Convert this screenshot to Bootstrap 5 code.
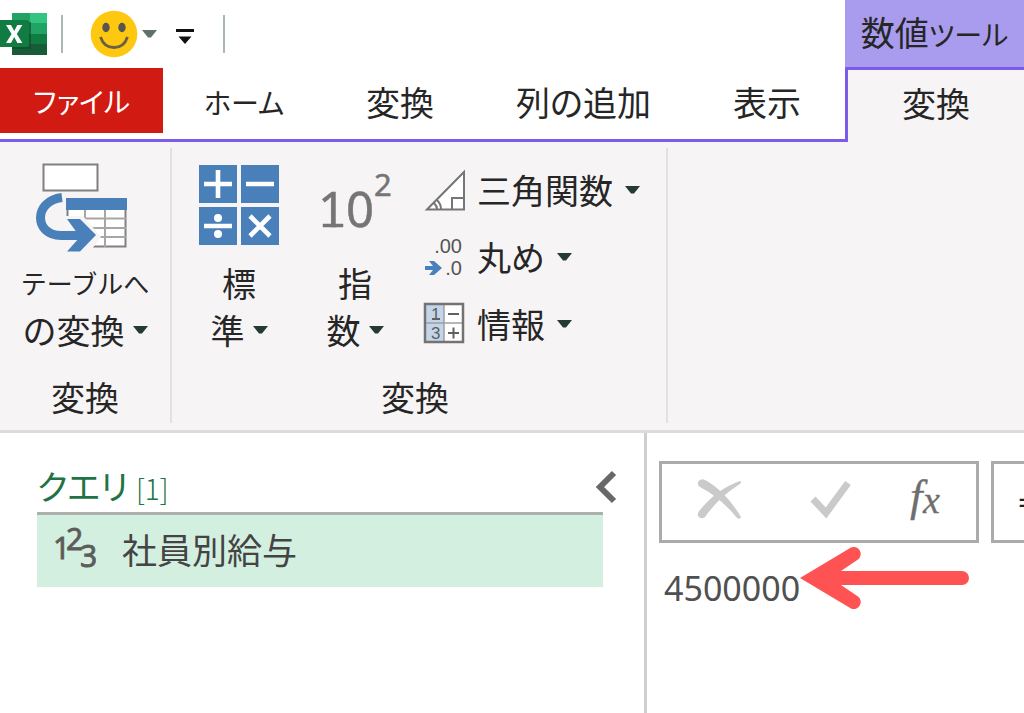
<!DOCTYPE html>
<html lang="ja">
<head>
<meta charset="utf-8">
<meta name="viewport" content="width=device-width, initial-scale=1">
<title>Power Query エディター</title>
<link href="https://cdn.jsdelivr.net/npm/bootstrap@5.3.0/dist/css/bootstrap.min.css" rel="stylesheet">
<style>
  body { font-family: "Noto Sans CJK JP", "Noto Sans", sans-serif; font-size: 34px; line-height: 48px; color: #262626; font-feature-settings: "palt"; font-weight: 400; overflow-x: hidden; }
  svg { display: block; flex: none; }
  .kana { font-size: 28px; }
  .kana-sm { font-size: 26px; }
  .btn-plain { border: 0; background: none; padding: 0; color: inherit; font-weight: inherit; }
  .quick-bar { height: 68px; }
  .quick-sep { width: 2px; height: 38px; background: #a9bab6; }
  .sep-first { margin: 0 27px 0 13px; }
  .sep-last { margin-left: 29px; }
  .quick-more { margin-left: 19px; }
  .tab-row { height: 74px; border-bottom: 3px solid #7a5bea; }
  .tab-item { display: block; padding: 10px 41px 0; color: #262626; text-decoration: none; white-space: nowrap; }
  .tab-file { width: 163px; height: 65px; padding: 9px 0 0; background: #d01a12; color: #fff; text-align: center; }
  .tool-side { width: 179px; }
  .tool-title { height: 67px; padding-top: 8px; background: #a99cee; }
  .tool-tab { height: 75px; padding: 9px 0 0; border-top: 3px solid #7a5bea; border-left: 3px solid #7a5bea; background: #f6f4f5; text-align: center; }
  .ribbon { background: #f6f4f5; border-bottom: 3px solid #dcdcdc; padding: 6px 0 7px; }
  .ribbon-group { border-right: 2px solid #dfe2e3; height: 275px; }
  .group-a { width: 172px; }
  .group-b { width: 496px; padding-left: 9px; }
  .group-label { margin-top: 20px; text-align: center; }
  .group-b .group-label { padding-right: 17px; }
  .big-btn { width: 116px; padding-top: 14px; line-height: 47px; }
  .big-icon { height: 90px; margin-bottom: 7px; }
  .big-btn.wide { width: 170px; }
  .caret { width: 15px; height: 8px; }
  .small-list { padding: 18px 0 0 10px; gap: 19px; }
  .small-btn { gap: 12px; }
  .query-pane { width: 647px; border-right: 3px solid #cfcfcf; padding: 29px 0 0 37px; }
  .query-head { padding-right: 26px; height: 50px; color: #217346; }
  .query-count { font-size: 28px; font-weight: 300; margin-left: 8px; }
  .query-list { margin-right: 41px; border-top: 3px solid #acb1ae; }
  .query-item { height: 72px; background: #d3efe0; padding: 0 0 4px 17px; gap: 26px; color: #444; width: 100%; font-size: 35px; }
  .preview { padding: 28px 0 0 12px; min-width: 0; overflow: hidden; }
  .fx-box { width: 320px; height: 82px; border: 3px solid #ababab; flex: none; padding: 0 35px 6px; }
  .fx-input { height: 82px; min-width: 260px; border: 3px solid #ababab; border-radius: 0; padding: 0 24px; font-family: "Noto Sans", sans-serif; font-size: 30px; color: #222; }
  .fx-input:focus { outline: 0; }
  .result { font-family: "Noto Sans", sans-serif; color: #505050; padding: 1px 0 0 5px; }
  .result output { padding-top: 20px; }
  .num { font-family: "Noto Sans", sans-serif; }
  .mini { font-family: "Liberation Sans", sans-serif; }
</style>
</head>
<body class="d-flex flex-column min-vh-100 bg-white">

<header class="d-flex">
  <div class="flex-grow-1">
    <div class="quick-bar d-flex align-items-center">
      <svg width="48" height="46" viewBox="0 0 48 46" aria-hidden="true">
        <path fill="#21a366" d="M12 2h18v14H12z"/><path fill="#33c481" d="M30 2h17v11H30z"/>
        <path fill="#27a268" d="M12 12h35v12H12z"/><path fill="#107c41" d="M12 23h35v11H12z"/>
        <path fill="#185c37" d="M12 33h35v11H12z"/><path fill="#21a366" d="M30 12h17v11H30z"/>
        <path fill="#14482c" d="M12 11h19v27H12z" opacity=".65"/>
        <path fill="#107c41" d="M0 9h27q2 0 2 2v23q0 2-2 2H0z"/>
        <path fill="#fff" d="M6 14h5l3.200 6 3.200-6h5l-5.600 9 5.600 9h-5l-3.200-6-3.200 6H6l5.600-9z"/>
      </svg>
      <span class="quick-sep sep-first"></span>
      <button class="btn-plain d-flex align-items-center" aria-label="フィードバック">
        <svg width="48" height="48" viewBox="0 0 48 48"><circle cx="24" cy="24" r="23.300" fill="#ffc810"/><ellipse cx="16" cy="17.500" rx="3.700" ry="4.700" fill="#575452"/><ellipse cx="32" cy="17.500" rx="3.700" ry="4.700" fill="#575452"/><path d="M10.500 27q3.500 10.500 13.500 10.500T37.500 27" fill="none" stroke="#6c5f43" stroke-width="2.800"/></svg>
        <svg class="ms-1" width="15" height="8" viewBox="0 0 15 8"><path d="M0 0h15L9 7.500H6z" fill="#60716d"/></svg>
      </button>
      <button class="btn-plain quick-more" aria-label="クイック アクセスのカスタマイズ">
        <svg width="18" height="24" viewBox="0 0 18 24"><path d="M0 7h18v3H0zM2.500 14.500h13L9 22z" fill="#111"/></svg>
      </button>
      <span class="quick-sep sep-last"></span>
    </div>
    <nav class="tab-row d-flex">
      <a href="#" class="tab-item tab-file kana">ファイル</a>
      <a href="#" class="tab-item kana">ホーム</a>
      <a href="#" class="tab-item">変換</a>
      <a href="#" class="tab-item">列の追加</a>
      <a href="#" class="tab-item">表示</a>
    </nav>
  </div>
  <div class="tool-side flex-shrink-0">
    <div class="tool-title text-center">数値<span class="kana">ツール</span></div>
    <a href="#" class="tab-item tool-tab" aria-current="page">変換</a>
  </div>
</header>

<section class="ribbon d-flex">
  <div class="ribbon-group group-a">
    <button class="btn-plain big-btn wide d-flex flex-column align-items-center">
      <svg class="big-icon" width="100" viewBox="0 0 100 90">
        <path d="M8.500 2.500h54v26h-54z" fill="#fff" stroke="#808080" stroke-width="2"/>
        <path d="M32.500 38.500h58v46h-58z" fill="#fff" stroke="#808080" stroke-width="2"/>
        <path d="M50 48v37M70 48v37M33 56.500h58M33 66h58M33 75h58" stroke="#a6a6a6" stroke-width="2"/>
        <path d="M31 36h61v12H31z" fill="#4a80ba"/>
        <path d="M30 54h18l18 21-12 16H16V72z" fill="#f6f4f5"/>
        <path d="M27 35.500C-2 39-1 73.500 26 73.500h20" fill="none" stroke="#4a80ba" stroke-width="9"/>
        <path d="M32 57h13l16 16-16 16.500H32l13-14.500z" fill="#4a80ba"/>
      </svg>
      <span class="kana-sm">テーブルへ</span>
      <span class="d-flex align-items-center gap-2">の変換 <svg class="caret" viewBox="0 0 15 8"><path d="M0 0h15L9 7.500H6z" fill="#243b34"/></svg></span>
    </button>
    <div class="group-label">変換</div>
  </div>
  <div class="ribbon-group group-b">
    <div class="d-flex">
      <button class="btn-plain big-btn d-flex flex-column align-items-center">
        <svg class="big-icon" width="80" viewBox="0 0 80 90">
          <path fill="#4a80ba" d="M0 3h38v38H0zM42 3h38v38H42zM0 45h38v38H0zM42 45h38v38H42z"/>
          <path d="M5 22h28M19 8v28M47 22h28M5 64h28M51 54l20 20M71 54l-20 20" stroke="#fff" stroke-width="4.600"/>
          <circle cx="19" cy="56" r="4" fill="#fff"/><circle cx="19" cy="72" r="4" fill="#fff"/>
        </svg>
        <span>標</span>
        <span class="d-flex align-items-center gap-2">準 <svg class="caret" viewBox="0 0 15 8"><path d="M0 0h15L9 7.500H6z" fill="#243b34"/></svg></span>
      </button>
      <button class="btn-plain big-btn d-flex flex-column align-items-center">
        <svg class="big-icon num" width="74" viewBox="0 0 74 90" fill="#757575" stroke="#757575" stroke-width=".5"><text x="0" y="65" font-size="49">10</text><path d="M5 62h20v3H5z"/><text x="56" y="34" font-size="31">2</text></svg>
        <span>指</span>
        <span class="d-flex align-items-center gap-2">数 <svg class="caret" viewBox="0 0 15 8"><path d="M0 0h15L9 7.500H6z" fill="#243b34"/></svg></span>
      </button>
      <div class="small-list d-flex flex-column align-items-start">
        <button class="btn-plain small-btn d-flex align-items-center">
          <svg width="42" height="44" viewBox="0 0 42 44" fill="#fff" stroke="#767676" stroke-width="2"><path d="M4 41.500 41 4v37.500z"/><path d="M29 41V30h11M14 32q4 4 4 9M14 41q0-3-3-6" fill="none"/></svg>
          <span>三角関数</span><svg class="caret" viewBox="0 0 15 8"><path d="M0 0h15L9 7.500H6z" fill="#243b34"/></svg>
        </button>
        <button class="btn-plain small-btn d-flex align-items-center">
          <svg class="mini" width="42" height="44" viewBox="0 0 42 44" fill="#555"><text x="39" y="18" font-size="20" text-anchor="end">.00</text><text x="39" y="40" font-size="20" text-anchor="end">.0</text><path d="M2 31h8l-4-5h5l8 7-8 7H6l4-5H2z" fill="#4a80ba"/></svg>
          <span>丸め</span><svg class="caret" viewBox="0 0 15 8"><path d="M0 0h15L9 7.500H6z" fill="#243b34"/></svg>
        </button>
        <button class="btn-plain small-btn d-flex align-items-center">
          <svg class="mini" width="42" height="44" viewBox="0 0 42 44"><path d="M2 2h38v38H2z" fill="#fff"/><path d="M2 2h19v38H2z" fill="#c3d5e8"/><path d="M21 2v38M2 21h38" stroke="#a0a0a0" stroke-width="1.500"/><path d="M2 2h38v38H2z" fill="none" stroke="#737373" stroke-width="2.500"/><path d="M25 12h11M25 31h11M30.500 25.500v11" stroke="#606060" stroke-width="2"/><path d="M9 16h8v2H9z" fill="#606060"/><g fill="#606060" font-size="17"><text x="8" y="18">1</text><text x="8" y="37">3</text></g></svg>
          <span>情報</span><svg class="caret" viewBox="0 0 15 8"><path d="M0 0h15L9 7.500H6z" fill="#243b34"/></svg>
        </button>
      </div>
    </div>
    <div class="group-label">変換</div>
  </div>
</section>

<main class="d-flex flex-grow-1">
  <aside class="query-pane flex-shrink-0">
    <div class="query-head d-flex align-items-center">
      <span>クエリ<span class="query-count">[1]</span></span>
      <button class="btn-plain ms-auto" aria-label="折りたたむ"><svg width="24" height="34" viewBox="0 0 24 34"><path d="M20 3 6 17l14 14" fill="none" stroke="#686868" stroke-width="6"/></svg></button>
    </div>
    <div class="query-list">
      <button class="btn-plain query-item d-flex align-items-center">
        <svg class="num" width="42" height="44" viewBox="0 0 42 44" fill="#5c5c5c" stroke="#5c5c5c" stroke-width=".8"><text x="-1" y="32" font-size="30">1</text><text x="12" y="23" font-size="30">2</text><text x="26" y="40" font-size="30">3</text></svg>
        <span>社員別給与</span>
      </button>
    </div>
  </aside>
  <section class="preview flex-grow-1">
    <div class="d-flex gap-2">
      <div class="fx-box d-flex align-items-center justify-content-between me-1">
        <button class="btn-plain" aria-label="キャンセル"><svg width="44" height="42" viewBox="0 0 44 42" fill="#cacaca"><path d="M1 4Q4-1 10 3q19 11 34 36-1 3-4 1Q24 20 3 9 0 7 1 4z"/><path d="M43 3q2 1 0 3Q22 19 8 39q-4 3-7-1-1-3 2-6Q20 11 43 3z"/></svg></button>
        <button class="btn-plain ms-3" aria-label="確定"><svg width="42" height="40" viewBox="0 0 42 40"><path d="M3 20l13 14L38 4" fill="none" stroke="#cacaca" stroke-width="7"/></svg></button>
        <button class="btn-plain" aria-label="関数の挿入"><svg width="36" height="46" viewBox="0 0 36 46" fill="#6e6e6e" stroke="#6e6e6e" stroke-width=".3" font-family="Liberation Serif, serif" font-style="italic"><text x="5" y="35" font-size="45">f</text><text x="18" y="37" font-size="38">x</text></svg></button>
      </div>
      <input class="fx-input flex-grow-1" type="text" value="=" aria-label="数式">
    </div>
    <div class="result d-flex">
      <output>4500000</output>
      <svg width="172" height="68" viewBox="0 0 172 68"><path d="M0 34 51 3.500a7 7 0 0 1 7 12L41 27h121a7 7 0 0 1 0 14H41l17 11.500a7 7 0 0 1-7 12z" fill="#ff5252"/></svg>
    </div>
  </section>
</main>

<script src="https://cdn.jsdelivr.net/npm/bootstrap@5.3.0/dist/js/bootstrap.bundle.min.js"></script>
</body>
</html>
